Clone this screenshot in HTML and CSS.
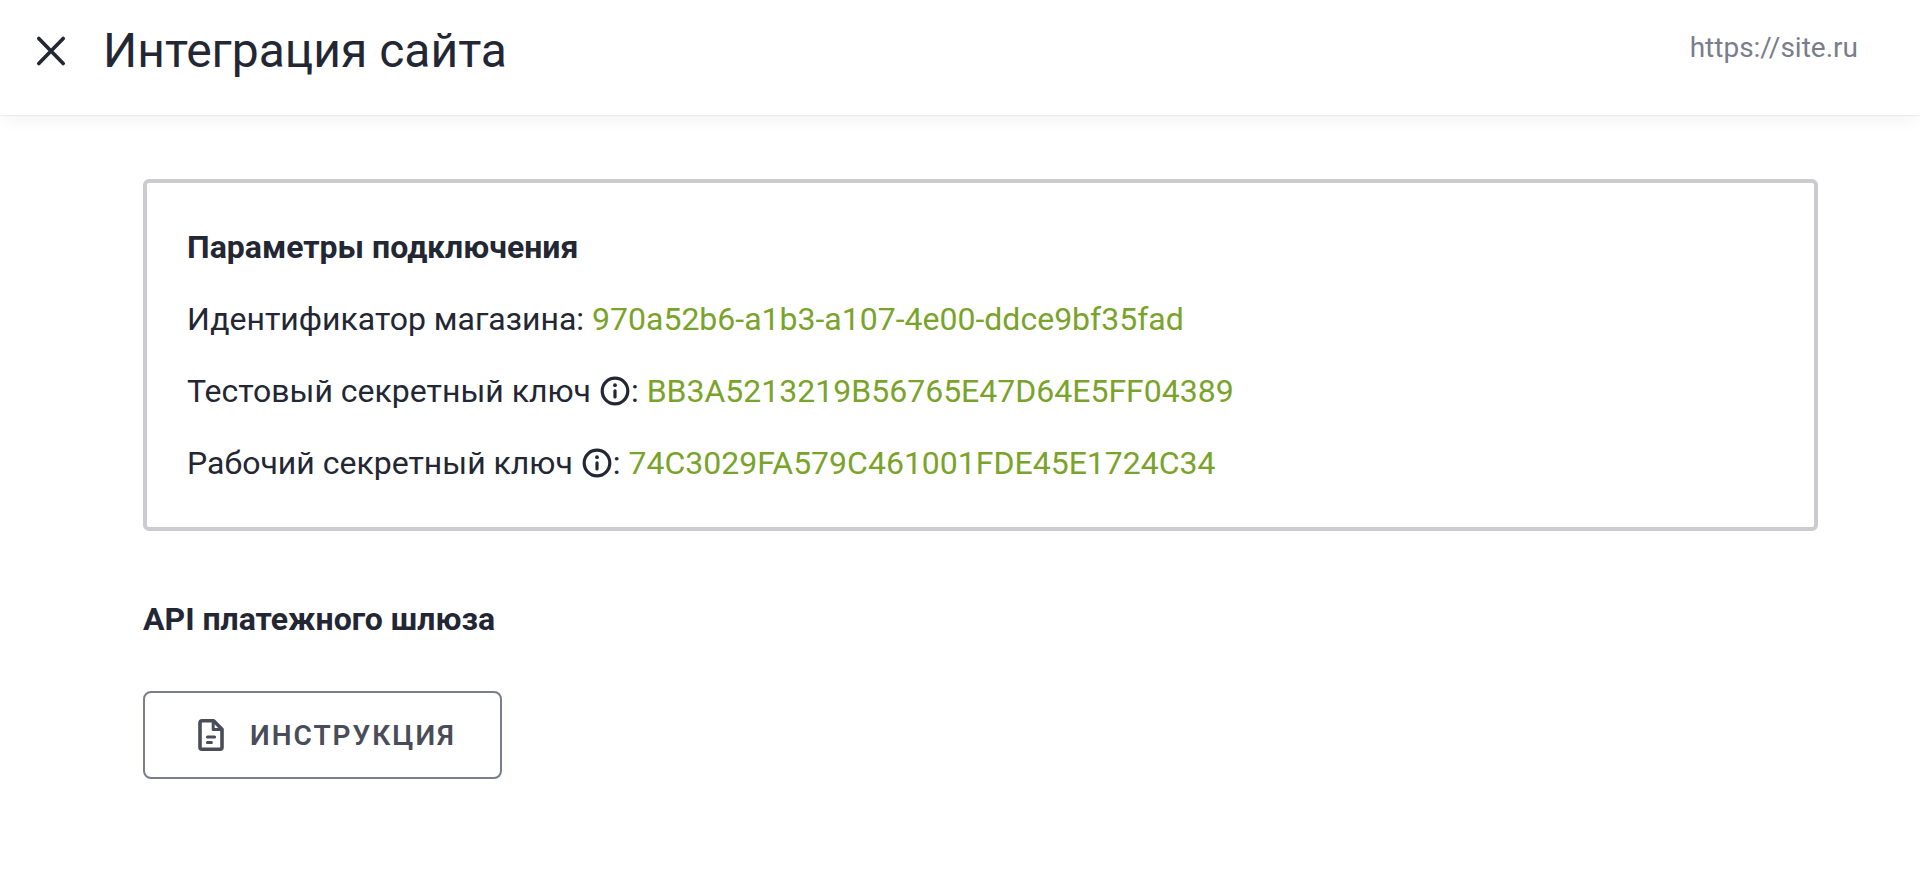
FILE: index.html
```
<!DOCTYPE html>
<html lang="ru">
<head>
    <meta charset="UTF-8">
    <meta name="viewport" content="width=device-width, initial-scale=1.0">
    <title>Интеграция сайта</title>
    <link rel="stylesheet" href="styles.css">
</head>
<body>

    <header class="header">
        <button type="button" class="close-button" aria-label="Закрыть">
            <svg width="32" height="32" viewBox="0 0 32 32" fill="none" stroke="currentColor" stroke-width="3.7" stroke-linecap="round">
                <path d="M3.8 3.5 L28.2 28.5 M28.2 3.5 L3.8 28.5"/>
            </svg>
        </button>
        <h1>Интеграция сайта</h1>
        <a href="https://site.ru" class="site-link">https://site.ru</a>
    </header>

    <main class="content">
        <!-- Connection parameters -->
        <section class="params">
            <h2>Параметры подключения</h2>
            <p>Идентификатор магазина: <span class="value">970a52b6-a1b3-a107-4e00-ddce9bf35fad</span></p>
            <p>Тестовый секретный ключ <svg class="info-icon" viewBox="0 0 32 32"><circle cx="16" cy="16" r="12.8" fill="none" stroke="currentColor" stroke-width="3.2"/><circle cx="16" cy="10.2" r="1.9" fill="currentColor"/><path d="M16 15.8 V22" stroke="currentColor" stroke-width="3.2" stroke-linecap="round"/></svg>: <span class="value">BB3A5213219B56765E47D64E5FF04389</span></p>
            <p>Рабочий секретный ключ <svg class="info-icon" viewBox="0 0 32 32"><circle cx="16" cy="16" r="12.8" fill="none" stroke="currentColor" stroke-width="3.2"/><circle cx="16" cy="10.2" r="1.9" fill="currentColor"/><path d="M16 15.8 V22" stroke="currentColor" stroke-width="3.2" stroke-linecap="round"/></svg>: <span class="value">74C3029FA579C461001FDE45E1724C34</span></p>
        </section>

        <!-- Gateway API docs -->
        <section class="api">
            <h2>API платежного шлюза</h2>
            <button type="button" class="doc-button">
                <svg width="26" height="34" viewBox="0 0 26 34" fill="none" stroke="currentColor" stroke-width="3.6" stroke-linecap="round" stroke-linejoin="round">
                    <path d="M4 2.8 H15.6 L24 11.2 V29.2 Q24 31.2 22 31.2 H4 Q2 31.2 2 29.2 V4.8 Q2 2.8 4 2.8 Z"/>
                    <path d="M15.2 4 V11.6 H23" stroke-width="3"/>
                    <path d="M9.4 19 H16.6 M9.4 24.4 H13.4" stroke-width="3"/>
                </svg>
                Инструкция
            </button>
        </section>
    </main>

</body>
</html>
```
FILE: styles.css
```
* {
    box-sizing: border-box;
}

body {
    margin: 0;
    font-family: Roboto, sans-serif;
    font-size: 32px;
    line-height: 48px;
    color: #232733;
    background-color: #fff;
}

h1, h2, p {
    margin: 0;
}

.header {
    display: flex;
    align-items: flex-start;
    padding: 19px 62px 32px 35px;
    box-shadow: 0 0 2px rgba(0, 0, 0, 0.16), 0 8px 16px -4px rgba(35, 39, 51, 0.06);
}

.close-button {
    display: flex;
    padding: 16px 0;
    border: 0;
    color: inherit;
    background: none;
    cursor: pointer;
}

.header h1 {
    flex: 1;
    margin-left: 36px;
    font-size: 48px;
    font-weight: 400;
    line-height: 64px;
}

.site-link {
    padding-top: 5px;
    font-size: 28px;
    color: #7a7d8b;
    text-decoration: none;
}

.content {
    padding: 64px 102px 64px 143px;
}

.params {
    display: flex;
    flex-direction: column;
    gap: 24px;
    padding: 40px;
    border: 4px solid #cbcbd0;
    border-radius: 6px;
}

h2 {
    font-size: 32px;
    font-weight: 700;
}

.value {
    color: #7aa32b;
}

.info-icon {
    width: 32px;
    height: 32px;
    vertical-align: -5px;
}

.api {
    margin-top: 64px;
}

.doc-button {
    display: flex;
    align-items: center;
    gap: 26px;
    height: 88px;
    margin-top: 48px;
    padding: 0 44px 0 53px;
    border: 2px solid #7a7d8b;
    border-radius: 8px;
    font-family: inherit;
    font-size: 28px;
    font-weight: 600;
    letter-spacing: 2px;
    text-transform: uppercase;
    color: #494d5a;
    background: none;
    cursor: pointer;
}
```
